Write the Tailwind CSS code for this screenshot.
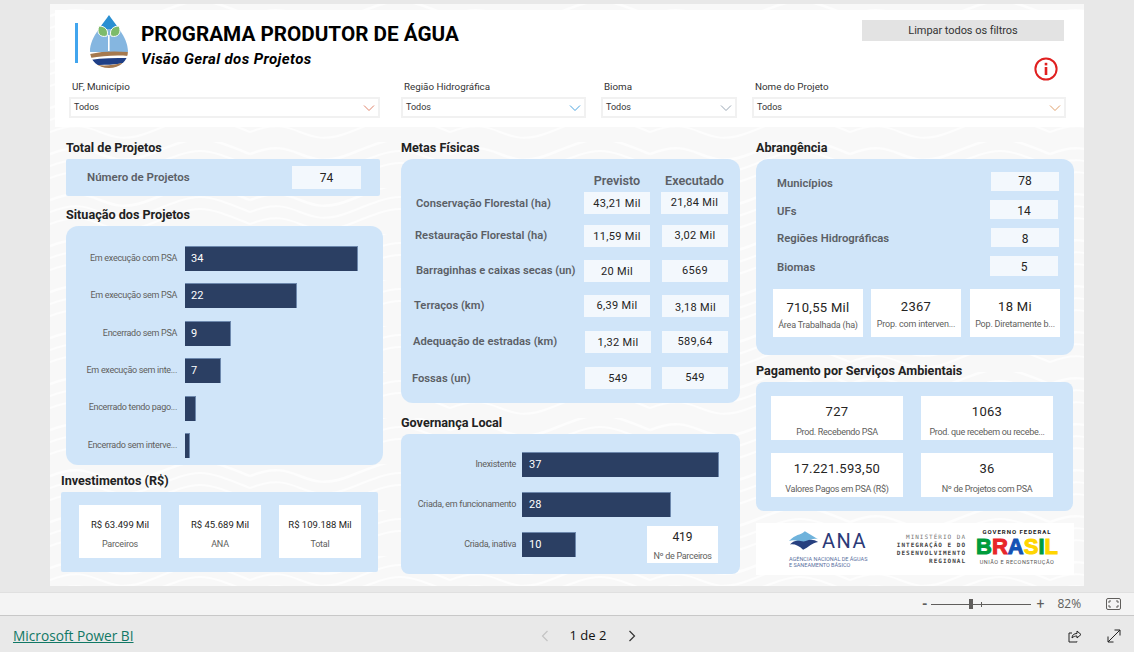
<!DOCTYPE html>
<html lang="pt-BR">
<head>
  <meta charset="UTF-8">
  <title>Programa Produtor de Água</title>
  <script src="https://cdn.jsdelivr.net/npm/@tailwindcss/browser@4"></script>
</head>
<body class="h-[652px] w-[1134px] overflow-hidden bg-[#e8e8e8] font-['Roboto',sans-serif] text-[#252423]">

  <!-- report canvas -->
  <main class="relative ml-[50px] mt-[4px] h-[582px] w-[1034px] overflow-hidden bg-[#f8f8f8] pt-[6px]">
    <svg class="absolute inset-0 h-full w-full" aria-hidden="true">
      <defs>
        <pattern id="waves" width="200" height="46" patternUnits="userSpaceOnUse">
          <path d="M0 12 C50 -8 50 32 100 12 S150 -8 200 12" fill="none" stroke="#ffffff" stroke-opacity="0.7" stroke-width="2.5"/>
          <path d="M0 24 C50 4 50 44 100 24 S150 4 200 24" fill="none" stroke="#ffffff" stroke-opacity="0.7" stroke-width="2"/>
          <path d="M0 36 C50 16 50 56 100 36 S150 16 200 36" fill="none" stroke="#ffffff" stroke-opacity="0.7" stroke-width="2"/>
        </pattern>
      </defs>
      <rect width="100%" height="100%" fill="url(#waves)"/>
    </svg>

    <!-- header -->
    <header class="relative ml-[5px] h-[117px] bg-white">
      <div class="flex h-[71px]">
        <div class="ml-[20px] mt-[13px] h-[40px] w-[3px] bg-[#41a5ee]"></div>
        <svg class="ml-[12px] mt-[5px] h-[53px] w-[38px]" viewBox="0 0 38 53">
          <defs><clipPath id="drop"><path d="M19 0 C24 8 38 22 38 36 C38 46 30 53 19 53 C8 53 0 46 0 36 C0 22 14 8 19 0Z"/></clipPath></defs>
          <g clip-path="url(#drop)">
            <rect width="38" height="53" fill="#ffffff"/>
            <rect width="38" height="14" fill="#2a8fd2"/>
            <rect y="14" width="38" height="23" fill="#85b6e0"/>
            <path d="M0 39 C12 36 26 36 38 37 V41 C26 40 12 41 0 43Z" fill="#a5794f"/>
            <path d="M0 45 C12 43 26 43 38 43 V47 C28 50 12 50 0 50Z" fill="#1f3f86"/>
            <path d="M8 50 C15 51 24 50 32 48 V53 H8Z" fill="#a5794f"/>
          </g>
          <rect x="18" y="20" width="1.6" height="16" fill="#ffffff"/>
          <path d="M17 21 C10 23 6 18 9 11 C15 11 19 15 17 21Z" fill="#7dbb6a" stroke="#ffffff" stroke-width="1"/>
          <path d="M21 21 C28 23 32 18 29 11 C23 11 19 15 21 21Z" fill="#7dbb6a" stroke="#ffffff" stroke-width="1"/>
        </svg>
        <div class="ml-[13px] pt-[11px]">
          <h1 class="text-[20.7px] font-bold leading-[26px] text-black">PROGRAMA PRODUTOR DE ÁGUA</h1>
          <p class="mt-[2px] text-[15px] font-bold italic leading-[20px] tracking-[0.4px] text-black">Visão Geral dos Projetos</p>
        </div>
        <div class="ml-auto flex flex-col items-end pt-[10px]">
          <button class="mr-[20px] h-[21px] w-[202px] bg-[#e3e3e3] text-[11px] leading-[21px] tracking-[-0.05px] text-[#333333]">Limpar todos os filtros</button>
          <svg class="mr-[26px] mt-[16px] h-[24px] w-[24px]" viewBox="0 0 24 24">
            <circle cx="12" cy="12" r="10.6" fill="none" stroke="#e02020" stroke-width="2"/>
            <rect x="10.7" y="10" width="2.6" height="8" fill="#e02020"/>
            <rect x="10.7" y="5.8" width="2.6" height="2.6" fill="#e02020"/>
          </svg>
        </div>
      </div>
      <div class="ml-[14px] flex gap-[15px] text-[9.8px] text-[#333333]">
        <div class="mr-[6px] w-[311px]">
          <p class="h-[16px] pl-[3px] leading-[12px]">UF, Município</p>
          <div class="flex h-[21px] items-center justify-between border-2 border-[#f1f1f1] pl-[3px] pr-[2px] pt-[1px] text-[9px]">Todos
            <svg class="h-[8px] w-[14px]" viewBox="0 0 14 8"><path d="M2 1.5 L7 6.5 L12 1.5" fill="none" stroke="#e0836b" stroke-width="1"/></svg>
          </div>
        </div>
        <div class="w-[185px]">
          <p class="h-[16px] pl-[3px] leading-[12px]">Região Hidrográfica</p>
          <div class="flex h-[21px] items-center justify-between border-2 border-[#f1f1f1] pl-[3px] pr-[2px] pt-[1px] text-[9px]">Todos
            <svg class="h-[8px] w-[14px]" viewBox="0 0 14 8"><path d="M2 1.5 L7 6.5 L12 1.5" fill="none" stroke="#4aa3df" stroke-width="1"/></svg>
          </div>
        </div>
        <div class="w-[136px]">
          <p class="h-[16px] pl-[3px] leading-[12px]">Bioma</p>
          <div class="flex h-[21px] items-center justify-between border-2 border-[#f1f1f1] pl-[3px] pr-[2px] pt-[1px] text-[9px]">Todos
            <svg class="h-[8px] w-[14px]" viewBox="0 0 14 8"><path d="M2 1.5 L7 6.5 L12 1.5" fill="none" stroke="#9aa7b5" stroke-width="1"/></svg>
          </div>
        </div>
        <div class="w-[314px]">
          <p class="h-[16px] pl-[3px] leading-[12px]">Nome do Projeto</p>
          <div class="flex h-[21px] items-center justify-between border-2 border-[#f1f1f1] pl-[3px] pr-[2px] pt-[1px] text-[9px]">Todos
            <svg class="h-[8px] w-[14px]" viewBox="0 0 14 8"><path d="M2 1.5 L7 6.5 L12 1.5" fill="none" stroke="#e0a06b" stroke-width="1"/></svg>
          </div>
        </div>
      </div>
    </header>

    <div class="relative mt-[11px] flex">

      <!-- left column -->
      <section class="ml-[11px] w-[322px]">
        <h2 class="ml-[5px] h-[21px] text-[12.6px] font-bold leading-[20px] text-[#222222]">Total de Projetos</h2>
        <div class="ml-[5px] flex h-[37px] w-[314px] items-center rounded-[2px] bg-[#cde4f9]/95 pl-[21px]">
          <span class="w-[205px] text-[11.5px] font-semibold text-[#5b5f66]">Número de Projetos</span>
          <span class="mb-[1px] h-[23px] w-[69px] bg-[#f3f8fd] text-center text-[12px] leading-[24px]">74</span>
        </div>

        <h2 class="ml-[5px] mt-[9px] h-[21px] text-[12.6px] font-bold leading-[20px] text-[#222222]">Situação dos Projetos</h2>
        <div class="ml-[5px] flex h-[239px] w-[317px] flex-col gap-[12.4px] rounded-[12px] bg-[#cde4f9]/95 pt-[20px] text-[9px] tracking-[-0.3px] text-[#605e5c]">
          <div class="flex h-[25px] items-center"><span class="w-[111px] whitespace-nowrap text-right">Em execução com PSA</span><span class="ml-[8px] h-full w-[173px] border-r border-t border-[#6d88ad] bg-[#2b3f63] pl-[6px] text-[11px] leading-[24px] tracking-normal text-white">34</span></div>
          <div class="flex h-[25px] items-center"><span class="w-[111px] whitespace-nowrap text-right">Em execução sem PSA</span><span class="ml-[8px] h-full w-[112px] border-r border-t border-[#6d88ad] bg-[#2b3f63] pl-[6px] text-[11px] leading-[24px] tracking-normal text-white">22</span></div>
          <div class="flex h-[25px] items-center"><span class="w-[111px] whitespace-nowrap text-right">Encerrado sem PSA</span><span class="ml-[8px] h-full w-[46px] border-r border-t border-[#6d88ad] bg-[#2b3f63] pl-[6px] text-[11px] leading-[24px] tracking-normal text-white">9</span></div>
          <div class="flex h-[25px] items-center"><span class="w-[111px] whitespace-nowrap text-right">Em execução sem inte...</span><span class="ml-[8px] h-full w-[36px] border-r border-t border-[#6d88ad] bg-[#2b3f63] pl-[6px] text-[11px] leading-[24px] tracking-normal text-white">7</span></div>
          <div class="flex h-[25px] items-center"><span class="w-[111px] whitespace-nowrap text-right">Encerrado tendo pago...</span><span class="ml-[8px] h-full w-[11px] border-r border-t border-[#6d88ad] bg-[#2b3f63]"></span></div>
          <div class="flex h-[25px] items-center"><span class="w-[111px] whitespace-nowrap text-right">Encerrado sem interve...</span><span class="ml-[8px] h-full w-[5px] border-r border-t border-[#6d88ad] bg-[#2b3f63]"></span></div>
        </div>

        <h2 class="mt-[6px] h-[21px] text-[12.6px] font-bold leading-[20px] text-[#222222]">Investimentos (R$)</h2>
        <div class="flex h-[80px] w-[317px] gap-[18px] rounded-[2px] bg-[#cde4f9]/95 pl-[18px] pt-[13px]">
          <div class="h-[53px] w-[82px] bg-white pt-[14px] text-center leading-[12px]"><p class="text-[9.5px]">R$ 63.499 Mil</p><p class="mt-[7px] text-[9px] tracking-[-0.2px] text-[#605e5c]">Parceiros</p></div>
          <div class="h-[53px] w-[82px] bg-white pt-[14px] text-center leading-[12px]"><p class="text-[9.5px]">R$ 45.689 Mil</p><p class="mt-[7px] text-[9px] tracking-[-0.2px] text-[#605e5c]">ANA</p></div>
          <div class="h-[53px] w-[82px] bg-white pt-[14px] text-center leading-[12px]"><p class="text-[9.5px]">R$ 109.188 Mil</p><p class="mt-[7px] text-[9px] tracking-[-0.2px] text-[#605e5c]">Total</p></div>
        </div>
      </section>

      <!-- middle column -->
      <section class="ml-[18px] w-[339px]">
        <h2 class="h-[21px] text-[12.6px] font-bold leading-[20px] text-[#222222]">Metas Físicas</h2>
        <div class="h-[244px] rounded-[12px] bg-[#cde4f9]/95 text-[11px] tracking-[0.3px]">
          <div class="flex h-[31px] items-end text-[12.6px] font-semibold leading-[18px] tracking-normal text-[#5b5f66]">
            <span class="ml-[183px] w-[66px] text-center">Previsto</span>
            <span class="ml-[11px] w-[67px] text-center">Executado</span>
          </div>
          <div class="mt-[2px] flex h-[22px] items-center"><span class="mt-[2px] w-[183px] pl-[15px] text-[11.2px] font-semibold tracking-normal text-[#5b5f66]">Conservação Florestal (ha)</span><span class="h-full w-[66px] bg-[#f3f8fd] text-center leading-[24px]">43,21 Mil</span><span class="ml-[11px] h-full w-[67px] bg-[#f3f8fd] text-center leading-[22px]">21,84 Mil</span></div>
          <div class="mt-[11px] flex h-[22px] items-center"><span class="mt-[1px] w-[183px] pl-[14px] text-[11.2px] font-semibold tracking-normal text-[#5b5f66]">Restauração Florestal (ha)</span><span class="h-full w-[66px] bg-[#f3f8fd] text-center leading-[24px]">11,59 Mil</span><span class="ml-[12px] h-full w-[66px] bg-[#f3f8fd] text-center leading-[22px]">3,02 Mil</span></div>
          <div class="mt-[13px] flex h-[22px] items-center"><span class="mt-[1px] w-[183px] whitespace-nowrap pl-[15px] text-[11.2px] font-semibold tracking-normal text-[#5b5f66]">Barraginhas e caixas secas (un)</span><span class="h-full w-[66px] bg-[#f3f8fd] text-center leading-[24px]">20 Mil</span><span class="ml-[12px] h-full w-[66px] bg-[#f3f8fd] text-center leading-[22px]">6569</span></div>
          <div class="mt-[13px] flex h-[22px] items-center"><span class="mt-[1px] w-[183px] pl-[13px] text-[11.2px] font-semibold tracking-normal text-[#5b5f66]">Terraços (km)</span><span class="h-full w-[66px] bg-[#f3f8fd] text-center leading-[22px]">6,39 Mil</span><span class="ml-[12px] h-full w-[67px] bg-[#f3f8fd] text-center leading-[25px]">3,18 Mil</span></div>
          <div class="mt-[14px] flex h-[22px] items-center"><span class="w-[184px] pl-[12px] text-[11.2px] font-semibold tracking-normal text-[#5b5f66]">Adequação de estradas (km)</span><span class="h-full w-[66px] bg-[#f3f8fd] text-center leading-[24px]">1,32 Mil</span><span class="ml-[11px] h-full w-[66px] bg-[#f3f8fd] text-center leading-[22px]">589,64</span></div>
          <div class="mt-[14px] flex h-[22px] items-center"><span class="mt-[2px] w-[184px] pl-[11px] text-[11.2px] font-semibold tracking-normal text-[#5b5f66]">Fossas (un)</span><span class="h-full w-[66px] bg-[#f3f8fd] text-center leading-[24px]">549</span><span class="ml-[11px] h-full w-[66px] bg-[#f3f8fd] text-center leading-[22px]">549</span></div>
        </div>

        <h2 class="mt-[10px] h-[21px] text-[12.6px] font-bold leading-[20px] text-[#222222]">Governança Local</h2>
        <div class="relative flex h-[140px] flex-col gap-[15px] rounded-[8px] bg-[#cde4f9]/95 pt-[18px] text-[9px] tracking-[-0.3px] text-[#605e5c]">
          <div class="flex h-[25px] items-center"><span class="w-[115px] whitespace-nowrap text-right">Inexistente</span><span class="ml-[6px] h-full w-[197px] border-r border-t border-[#6d88ad] bg-[#2b3f63] pl-[7px] text-[11px] leading-[24px] tracking-normal text-white">37</span></div>
          <div class="flex h-[25px] items-center"><span class="w-[115px] whitespace-nowrap text-right">Criada, em funcionamento</span><span class="ml-[6px] h-full w-[149px] border-r border-t border-[#6d88ad] bg-[#2b3f63] pl-[7px] text-[11px] leading-[24px] tracking-normal text-white">28</span></div>
          <div class="flex h-[25px] items-center"><span class="w-[115px] whitespace-nowrap text-right">Criada, inativa</span><span class="ml-[6px] h-full w-[54px] border-r border-t border-[#6d88ad] bg-[#2b3f63] pl-[7px] text-[11px] leading-[24px] tracking-normal text-white">10</span></div>
          <div class="absolute left-[246px] top-[92px] h-[37px] w-[71px] bg-white pt-[4px] text-center">
            <p class="text-[12px] leading-[14px] tracking-normal text-[#252423]">419</p>
            <p class="mt-[7px] whitespace-nowrap leading-[10px]">Nº de Parceiros</p>
          </div>
        </div>
      </section>

      <!-- right column -->
      <section class="ml-[16px] w-[318px]">
        <h2 class="h-[21px] text-[12.6px] font-bold leading-[20px] text-[#222222]">Abrangência</h2>
        <div class="h-[196px] rounded-[12px] bg-[#cde4f9]/95 pt-[13px] text-[12px]">
          <div class="flex h-[19px] items-center"><span class="mt-[5px] w-[235px] pl-[21px] text-[11.3px] font-semibold text-[#5b5f66]">Municípios</span><span class="h-full w-[68px] bg-[#f3f8fd] text-center leading-[19px]">78</span></div>
          <div class="mt-[9px] flex h-[19px] items-center"><span class="mt-[5px] w-[234px] pl-[21px] text-[11.3px] font-semibold text-[#5b5f66]">UFs</span><span class="h-full w-[68px] bg-[#f3f8fd] text-center leading-[23px]">14</span></div>
          <div class="mt-[9px] flex h-[19px] items-center"><span class="mt-[4px] w-[235px] pl-[21px] text-[11.3px] font-semibold text-[#5b5f66]">Regiões Hidrográficas</span><span class="h-full w-[68px] bg-[#f3f8fd] text-center leading-[23px]">8</span></div>
          <div class="mt-[9px] flex h-[20px] items-center"><span class="mt-[4px] w-[234px] pl-[21px] text-[11.3px] font-semibold text-[#5b5f66]">Biomas</span><span class="h-full w-[68px] bg-[#f3f8fd] text-center leading-[22px]">5</span></div>
          <div class="ml-[17px] mt-[13px] flex gap-[8px]">
            <div class="h-[48px] w-[90px] bg-white pt-[11px] text-center"><p class="text-[13px] leading-[16px] tracking-[0.3px]">710,55 Mil</p><p class="mt-[3px] whitespace-nowrap text-[9px] leading-[12px] tracking-[-0.2px] text-[#605e5c]">Área Trabalhada (ha)</p></div>
            <div class="h-[48px] w-[90px] bg-white pt-[10px] text-center"><p class="text-[13px] leading-[16px] tracking-[0.3px]">2367</p><p class="mt-[3px] whitespace-nowrap text-[9px] leading-[12px] tracking-[-0.2px] text-[#605e5c]">Prop. com interven...</p></div>
            <div class="ml-[1px] h-[48px] w-[90px] bg-white pt-[10px] text-center"><p class="text-[13px] leading-[16px] tracking-[0.3px]">18 Mi</p><p class="mt-[3px] whitespace-nowrap text-[9px] leading-[12px] tracking-[-0.2px] text-[#605e5c]">Pop. Diretamente b...</p></div>
          </div>
        </div>

        <h2 class="mt-[6px] h-[21px] text-[12.6px] font-bold leading-[20px] text-[#222222]">Pagamento por Serviços Ambientais</h2>
        <div class="grid h-[129px] w-[317px] grid-cols-[132px_132px] content-start gap-x-[18px] gap-y-[13px] rounded-[8px] bg-[#cde4f9]/95 pl-[15px] pt-[14px]">
          <div class="h-[44px] bg-white pt-[8px] text-center"><p class="text-[13px] leading-[16px] tracking-[0.3px]">727</p><p class="mt-[6px] whitespace-nowrap text-[9px] leading-[12px] tracking-[-0.3px] text-[#605e5c]">Prod. Recebendo PSA</p></div>
          <div class="h-[44px] bg-white pt-[8px] text-center"><p class="text-[13px] leading-[16px] tracking-[0.3px]">1063</p><p class="mt-[6px] whitespace-nowrap text-[9px] leading-[12px] tracking-[-0.3px] text-[#605e5c]">Prod. que recebem ou recebe...</p></div>
          <div class="h-[44px] bg-white pt-[8px] text-center"><p class="text-[13px] leading-[16px] tracking-[0.3px]">17.221.593,50</p><p class="mt-[6px] whitespace-nowrap text-[9px] leading-[12px] tracking-[-0.3px] text-[#605e5c]">Valores Pagos em PSA (R$)</p></div>
          <div class="h-[44px] bg-white pt-[8px] text-center"><p class="text-[13px] leading-[16px] tracking-[0.3px]">36</p><p class="mt-[6px] whitespace-nowrap text-[9px] leading-[12px] tracking-[-0.3px] text-[#605e5c]">Nº de Projetos com PSA</p></div>
        </div>

        <!-- partner logos -->
        <div class="mt-[12px] flex h-[52px] bg-white">
          <div class="ml-[33px] mt-[6px] w-[78px]">
            <div class="flex h-[24px] items-center">
              <svg class="h-[24px] w-[34px]" viewBox="0 0 34 24">
                <path d="M0 12 C8 4 12 6 18 1 L33 10 C26 8 22 12 16 14 C10 12 6 10 0 12Z" fill="#6fb3dc"/>
                <path d="M1 16 C8 8 14 14 19 12 C24 10 28 10 33 13 C26 14 22 19 16 22 C11 17 6 15 1 16Z" fill="#27407f"/>
              </svg>
              <span class="ml-[3px] text-[20px] leading-[24px] tracking-[1.5px] text-[#2b3a78]">ANA</span>
            </div>
            <p class="mt-[3px] whitespace-nowrap text-[5.5px] leading-[6px] text-[#5a6fa0]">AGÊNCIA NACIONAL DE ÁGUAS</p>
            <p class="whitespace-nowrap text-[5.5px] leading-[6px] text-[#5a6fa0]">E SANEAMENTO BÁSICO</p>
          </div>
          <div class="ml-[29px] mt-[10px] w-[70px] whitespace-nowrap text-right font-['DejaVu_Sans_Mono',monospace] text-[6px] leading-[8px] tracking-[1px] text-[#444444]">
            <p class="text-[#777777]">MINISTÉRIO DA</p>
            <p class="font-bold">INTEGRAÇÃO E DO</p>
            <p class="font-bold">DESENVOLVIMENTO</p>
            <p class="font-bold">REGIONAL</p>
          </div>
          <div class="ml-[11px] mt-[5px] w-[80px] text-center">
            <p class="whitespace-nowrap text-[6px] font-bold leading-[8px] tracking-[1px] text-[#222222]">GOVERNO FEDERAL</p>
            <p class="flex h-[22px] justify-center font-['Liberation_Sans',sans-serif] text-[22px] font-bold leading-[22px] [-webkit-text-stroke:1px_currentColor]">
              <span class="text-[#009c3b]">B</span><span class="text-[#e8262a]">R</span><span class="text-[#1351b4]">A</span><span class="text-[#ffd500]">S</span><span class="text-[#009c3b]">I</span><span class="text-[#ffd500]">L</span>
            </p>
            <p class="whitespace-nowrap text-[5.5px] leading-[8px] tracking-[0.5px] text-[#555555]">UNIÃO E RECONSTRUÇÃO</p>
          </div>
        </div>
      </section>
    </div>
  </main>

  <!-- zoom bar -->
  <div class="mt-[6px] flex h-[24px] items-center border-b border-t border-t-[#e0e0e0] border-b-[#c8c8c8] bg-[#f4f4f4] text-[#605e5c]">
    <span class="ml-[922px] text-[14px] font-bold leading-none">-</span>
    <div class="relative ml-[3px] h-[1px] w-[100px] bg-[#605e5c]">
      <span class="absolute left-[38px] top-[-5px] h-[10px] w-[4px] bg-[#605e5c]"></span>
      <span class="absolute left-[50px] top-[-2px] h-[5px] w-[1px] bg-[#605e5c]"></span>
    </div>
    <span class="ml-[6px] text-[14px] leading-none">+</span>
    <span class="ml-[13px] font-['Open_Sans',sans-serif] text-[12px]">82%</span>
    <svg class="ml-[25px] h-[12px] w-[15px]" viewBox="0 0 15 12" fill="none" stroke="#605e5c"><rect x="0.5" y="0.5" width="14" height="11" rx="1.5"/><path d="M3 5 V3 H5 M10 3 H12 V5 M12 7 V9 H10 M5 9 H3 V7"/></svg>
  </div>

  <!-- footer -->
  <footer class="flex h-[36px] items-center bg-[#e9e9e9] pt-[4px]">
    <a href="#" class="ml-[13px] font-['Open_Sans',sans-serif] text-[13.7px] text-[#117865] underline">Microsoft Power BI</a>
    <svg class="ml-[407px] h-[12px] w-[8px]" viewBox="0 0 8 12" fill="none" stroke="#c4c4c4" stroke-width="1.2"><path d="M6.5 1 L1.5 6 L6.5 11"/></svg>
    <span class="ml-[21px] font-['Open_Sans',sans-serif] text-[13px] font-medium text-[#111111]">1 de 2</span>
    <svg class="ml-[22px] h-[12px] w-[8px]" viewBox="0 0 8 12" fill="none" stroke="#333333" stroke-width="1.2"><path d="M1.5 1 L6.5 6 L1.5 11"/></svg>
    <svg class="ml-[432px] h-[14px] w-[14px]" viewBox="0 0 14 14" fill="none" stroke="#222222"><path d="M9 12.5 V13 H1 V4 H4"/><path d="M4 9 C4 6 6 4.5 9 4.5 V2 L13 5.5 L9 9 V7 C7 7 5.5 7.5 4 9Z"/></svg>
    <svg class="ml-[25px] h-[14px] w-[14px]" viewBox="0 0 14 14" fill="none" stroke="#222222"><path d="M1 13 L13 1 M7.5 1 H13 V6.5 M1 7.5 V13 H6.5"/></svg>
  </footer>
</body>
</html>
